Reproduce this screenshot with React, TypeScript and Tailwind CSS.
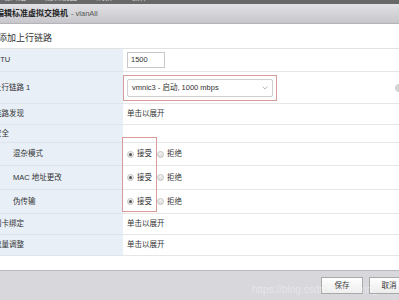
import React from "react";

const F = { fontFamily: '"Liberation Sans", "Noto Sans CJK SC", sans-serif' };

function Radio({ checked }: { checked?: boolean }) {
  return (
    <span className="w-[7px] h-[7px] rounded-full border border-[#c4c4c4] bg-gradient-to-b from-[#f4f4f4] to-[#dcdcdc] flex items-center justify-center shrink-0">
      {checked && <span className="w-[3px] h-[3px] rounded-full bg-[#555]" />}
    </span>
  );
}

function Row({
  label,
  h,
  indent,
  children,
  lastLine = true,
}: {
  label: string;
  h: string;
  indent?: boolean;
  children?: React.ReactNode;
  lastLine?: boolean;
}) {
  return (
    <div className={`flex ${h}`}>
      <div
        className={`w-[133px] shrink-0 bg-[#e8eff7] border-b border-[#dde4ec] flex items-center text-[7.5px] text-[#333] ${
          indent ? "pl-[23px]" : "pl-[4px]"
        }`}
      >
        {label}
      </div>
      <div
        className={`flex-1 flex items-center pl-[4px] text-[7.5px] text-[#333] ${
          lastLine ? "border-b border-[#e6e6e6]" : ""
        }`}
      >
        {children}
      </div>
    </div>
  );
}

function RadioPair() {
  return (
    <div className="flex items-center">
      <Radio checked />
      <span className="ml-[3px]">接受</span>
      <span className="ml-[5px]">
        <Radio />
      </span>
      <span className="ml-[3px]">拒绝</span>
    </div>
  );
}

export default function App() {
  return (
    <div
      className="w-[399px] h-[300px] overflow-hidden bg-white relative flex flex-col"
      style={F}
    >
      {/* top dark toolbar */}
      <div className="h-[4px] bg-[#686868] overflow-hidden relative shrink-0">
        <div className="flex items-end h-[12px] mt-[-8px] text-[8px] text-[#ddd] gap-[10px] pl-[2px]">
          <span>端口组</span>
          <span>✎ 编辑设置</span>
          <span>⟳ 刷新</span>
          <span>⚙ 操作</span>
        </div>
      </div>
      {/* title bar */}
      <div className="h-[20px] shrink-0 bg-gradient-to-b from-[#e2e2e6] to-[#c6c6cb] border-b border-[#b4b4b8] flex items-center ml-[-4px]">
        <span className="text-[8px] font-bold text-[#222]">编辑标准虚拟交换机</span>
        <span className="text-[7.5px] text-[#555] ml-[3px]">- vlanAll</span>
      </div>
      {/* heading */}
      <div className="h-[25px] shrink-0 flex items-center ml-[-2px] pt-[6px] text-[9px] text-[#333] border-b border-[#e2e2e2]">
        添加上行链路
      </div>
      {/* table */}
      <div className="ml-[-10px] shrink-0">
        <Row label="MTU" h="h-[23px]">
          <div className="w-[38px] h-[16px] border border-[#c8c8c8] flex items-center pl-[3px] text-[7.5px]">
            1500
          </div>
        </Row>
        <Row label="上行链路 1" h="h-[32px]">
          <div className="ml-[-4px] border border-[#d99a9a] p-[3px]">
            <div className="w-[146px] h-[18px] border border-[#cfcfcf] rounded-[2px] flex items-center pl-[4px] pr-[4px] justify-between">
              <span>vmnic3 - 启动, 1000 mbps</span>
              <svg width="6" height="4" viewBox="0 0 6 4">
                <path d="M0.5 0.5 L3 3 L5.5 0.5" fill="none" stroke="#aaa" strokeWidth="0.8" />
              </svg>
            </div>
          </div>
          <span className="ml-auto mr-[-4px] w-[8px] h-[8px] rounded-full bg-[#d4d4d4]" />
        </Row>
        <Row label="链路发现" h="h-[21px]">
          单击以展开
        </Row>
        <Row label="安全" h="h-[18px]" />
        <Row label="混杂模式" h="h-[23px]" indent>
          <RadioPair />
        </Row>
        <Row label="MAC 地址更改" h="h-[24px]" indent>
          <RadioPair />
        </Row>
        <Row label="伪传输" h="h-[24px]" indent>
          <RadioPair />
        </Row>
        <Row label="网卡绑定" h="h-[21px]">
          单击以展开
        </Row>
        <Row label="流量调整" h="h-[21px]">
          单击以展开
        </Row>
      </div>
      <div className="flex-1" />
      {/* footer */}
      <div className="h-[30px] shrink-0 bg-[#d7d7dc] border-t border-[#b9b9be] flex items-center justify-end pr-0 gap-[6px] mr-[-10px]">
        <button className="w-[42px] h-[17px] bg-gradient-to-b from-[#ffffff] to-[#ececec] border border-[#a9a9a9] text-[7.5px] text-[#333]">
          保存
        </button>
        <button className="w-[40px] h-[17px] bg-gradient-to-b from-[#ffffff] to-[#ececec] border border-[#a9a9a9] text-[7.5px] text-[#333]">
          取消
        </button>
      </div>
      {/* red annotation box around radios */}
      <div className="absolute left-[122px] top-[137px] w-[35px] h-[75px] border border-[#d99a9a] pointer-events-none" />
      {/* watermark */}
      <div className="absolute left-[252px] top-[282px] text-[10px] text-white/40 pointer-events-none whitespace-nowrap">
        https://blog.csdn.net/weixin_
      </div>
    </div>
  );
}
